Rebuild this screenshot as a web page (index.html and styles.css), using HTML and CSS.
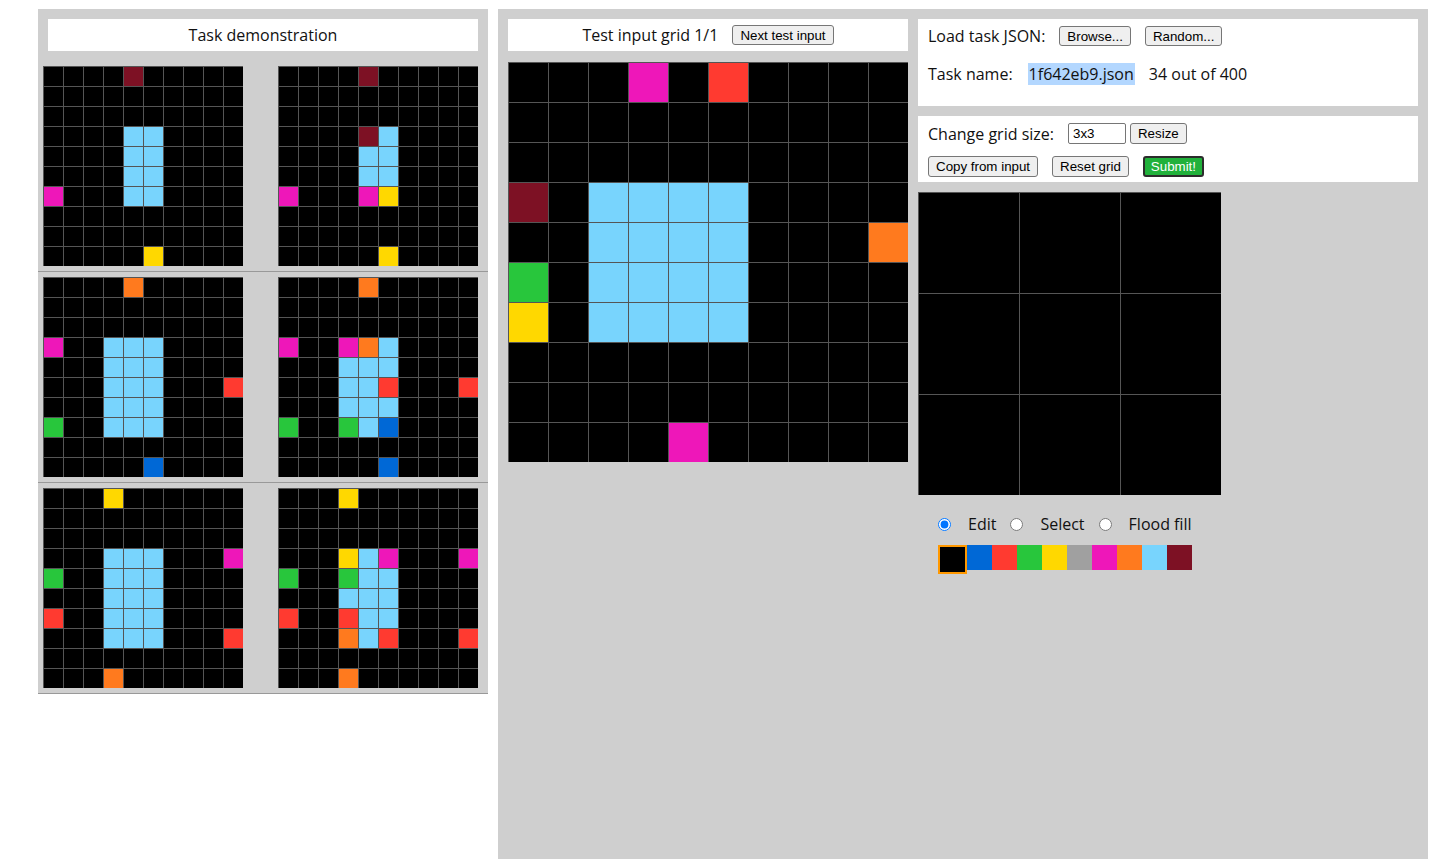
FILE: index.html
```html
<!DOCTYPE html>
<html>
<head>
<meta charset="utf-8">
<title>ARC testing interface</title>
<link rel="stylesheet" href="styles.css">
</head>
<body>
<div class="workspace">
  <div class="demo-panel">
    <div class="demo-title">Task demonstration</div>
    <div class="pair">
      <div class="grid small" data-grid="0000900000 0000000000 0000000000 0000880000 0000880000 0000880000 6000880000 0000000000 0000000000 0000040000"></div>
      <div class="grid small" data-grid="0000900000 0000000000 0000000000 0000980000 0000880000 0000880000 6000640000 0000000000 0000000000 0000040000"></div>
    </div>
    <div class="pair">
      <div class="grid small" data-grid="0000700000 0000000000 0000000000 6008880000 0008880000 0008880002 0008880000 3008880000 0000000000 0000010000"></div>
      <div class="grid small" data-grid="0000700000 0000000000 0000000000 6006780000 0008880000 0008820002 0008880000 3003810000 0000000000 0000010000"></div>
    </div>
    <div class="pair">
      <div class="grid small" data-grid="0004000000 0000000000 0000000000 0008880006 3008880000 0008880000 2008880000 0008880002 0000000000 0007000000"></div>
      <div class="grid small" data-grid="0004000000 0000000000 0000000000 0004860006 3003880000 0008880000 2002880000 0007820002 0000000000 0007000000"></div>
    </div>
  </div>

  <div class="test-panel">
    <div class="test-col">
      <div class="test-title"><span>Test input grid 1/1</span><button class="btn">Next test input</button></div>
      <div class="grid large" data-grid="0006020000 0000000000 0000000000 9088880000 0088880007 3088880000 4088880000 0000000000 0000000000 0000600000"></div>
    </div>
    <div class="ctrl-col">
      <div class="box load-box">
        <div class="row r1">
          <span>Load task JSON:</span>
          <button class="btn">Browse...</button>
          <button class="btn">Random...</button>
        </div>
        <div class="row r2">
          <span>Task name:</span>
          <span class="sel">1f642eb9.json</span>
          <span>34 out of 400</span>
        </div>
      </div>
      <div class="box edit-box">
        <div class="row r1">
          <span>Change grid size:</span>
          <input class="size-input" type="text" value="3x3">
          <button class="btn resize">Resize</button>
        </div>
        <div class="row r2">
          <button class="btn">Copy from input</button>
          <button class="btn">Reset grid</button>
          <button class="btn submit">Submit!</button>
        </div>
      </div>
      <div class="grid output" data-grid="000 000 000"></div>
      <div class="tools">
        <label class="tool"><input type="radio" name="tool" checked><span>Edit</span></label>
        <label class="tool"><input type="radio" name="tool"><span>Select</span></label>
        <label class="tool"><input type="radio" name="tool"><span>Flood fill</span></label>
      </div>
      <div class="palette">
        <div class="swatch c0 selected"></div>
        <div class="swatch c1"></div>
        <div class="swatch c2"></div>
        <div class="swatch c3"></div>
        <div class="swatch c4"></div>
        <div class="swatch c5"></div>
        <div class="swatch c6"></div>
        <div class="swatch c7"></div>
        <div class="swatch c8"></div>
        <div class="swatch c9"></div>
      </div>
    </div>
  </div>
</div>
<script src="script.js"></script>
</body>
</html>
```

FILE: styles.css
```css
html, body {
  margin: 0;
  padding: 0;
  background: #ffffff;
}
body {
  font-family: "Open Sans", "Noto Sans", sans-serif;
  font-size: 16px;
  color: #111;
}
.workspace {
  display: flex;
  align-items: flex-start;
  gap: 10px;
  padding: 9px 0 0 38px;
}

/* demonstration panel */
.demo-panel {
  width: 450px;
  background: #cfcfcf;
}
.demo-title {
  margin: 10px;
  height: 32px;
  line-height: 32px;
  background: #fff;
  text-align: center;
}
.pair {
  display: flex;
  justify-content: space-between;
  padding: 5px 10px 5px 5px;
  border-bottom: 1px solid #999;
}

/* grids */
.grid {
  display: grid;
  background: #000;
  align-self: flex-start;
}
.grid.small { grid-template-columns: repeat(10, 20px); grid-auto-rows: 20px; }
.grid.large { grid-template-columns: repeat(10, 40px); grid-auto-rows: 40px; }
.grid.output { grid-template-columns: repeat(3, 101px); grid-auto-rows: 101px; }
.cell {
  box-sizing: border-box;
  border-top: 1px solid #555;
  border-left: 1px solid #555;
}
.c0 { background: #000000; }
.c1 { background: #0068d6; }
.c2 { background: #ff3a30; }
.c3 { background: #28c63c; }
.c4 { background: #ffd800; }
.c5 { background: #a0a0a0; }
.c6 { background: #ee17b9; }
.c7 { background: #ff7a1e; }
.c8 { background: #78d4fd; }
.c9 { background: #7d1124; }

/* test panel */
.test-panel {
  box-sizing: border-box;
  width: 930px;
  height: 850px;
  padding: 10px;
  display: flex;
  align-items: flex-start;
  gap: 10px;
  background: #cfcfcf;
}
.test-col {
  width: 400px;
}
.test-title {
  height: 32px;
  background: #fff;
  display: flex;
  align-items: center;
  justify-content: center;
  gap: 14px;
}
.grid.large {
  margin-top: 11px;
}

.ctrl-col {
  width: 500px;
  display: flex;
  flex-direction: column;
}
.box {
  box-sizing: border-box;
  background: #fff;
  padding: 7px 10px 0;
  margin-bottom: 10px;
}
.load-box { height: 87px; }
.edit-box { height: 66px; }
.row {
  display: flex;
  align-items: center;
}
.load-box .r1 { height: 20px; gap: 14px; }
.load-box .r2 { height: 22px; margin-top: 17px; }
.load-box .r2 .sel {
  background: #b3d7ff;
  margin-left: 15px;
  padding: 0 1px;
  line-height: 22px;
}
.load-box .r2 .sel + span { margin-left: 14px; }
.edit-box .r1 { height: 21px; }
.edit-box .r2 { height: 21px; margin-top: 12px; gap: 14px; }

.btn {
  font-family: "Liberation Sans", Arial, sans-serif;
  font-size: 13.33px;
  color: #000;
  background: #efefef;
  border: 1px solid #767676;
  border-radius: 3px;
  padding: 0 7px;
  height: 20px;
  margin: 0;
}
.edit-box .btn { height: 21px; }
.size-input {
  box-sizing: border-box;
  width: 58px;
  height: 21px;
  margin: 0 0 0 14px;
  padding: 1px 4px;
  border: 1px solid #767676;
  border-radius: 2px;
  font-family: "Liberation Sans", Arial, sans-serif;
  font-size: 13.33px;
  color: #000;
}
.resize { margin-left: 4px; }
.submit {
  background: #21b13b;
  color: #fff;
  border: 2px solid #2c2c2c;
  padding: 0 6px;
}

.tools {
  display: flex;
  align-items: center;
  height: 22px;
  margin-top: 18px;
  padding-left: 20px;
}
.tool {
  display: flex;
  align-items: center;
  margin-right: 14px;
}
.tool input {
  margin: 0 17px 0 0;
  width: 13px;
  height: 13px;
}
.palette {
  display: flex;
  align-items: flex-start;
  margin-top: 10px;
  padding-left: 20px;
}
.swatch {
  width: 25px;
  height: 25px;
}
.swatch.selected {
  border: 2px solid #ff9800;
}
```

FILE: script.js
```js
document.querySelectorAll('[data-grid]').forEach(function (el) {
  el.dataset.grid.split(' ').forEach(function (row) {
    row.split('').forEach(function (ch) {
      var d = document.createElement('div');
      d.className = 'cell c' + ch;
      el.appendChild(d);
    });
  });
});
```
